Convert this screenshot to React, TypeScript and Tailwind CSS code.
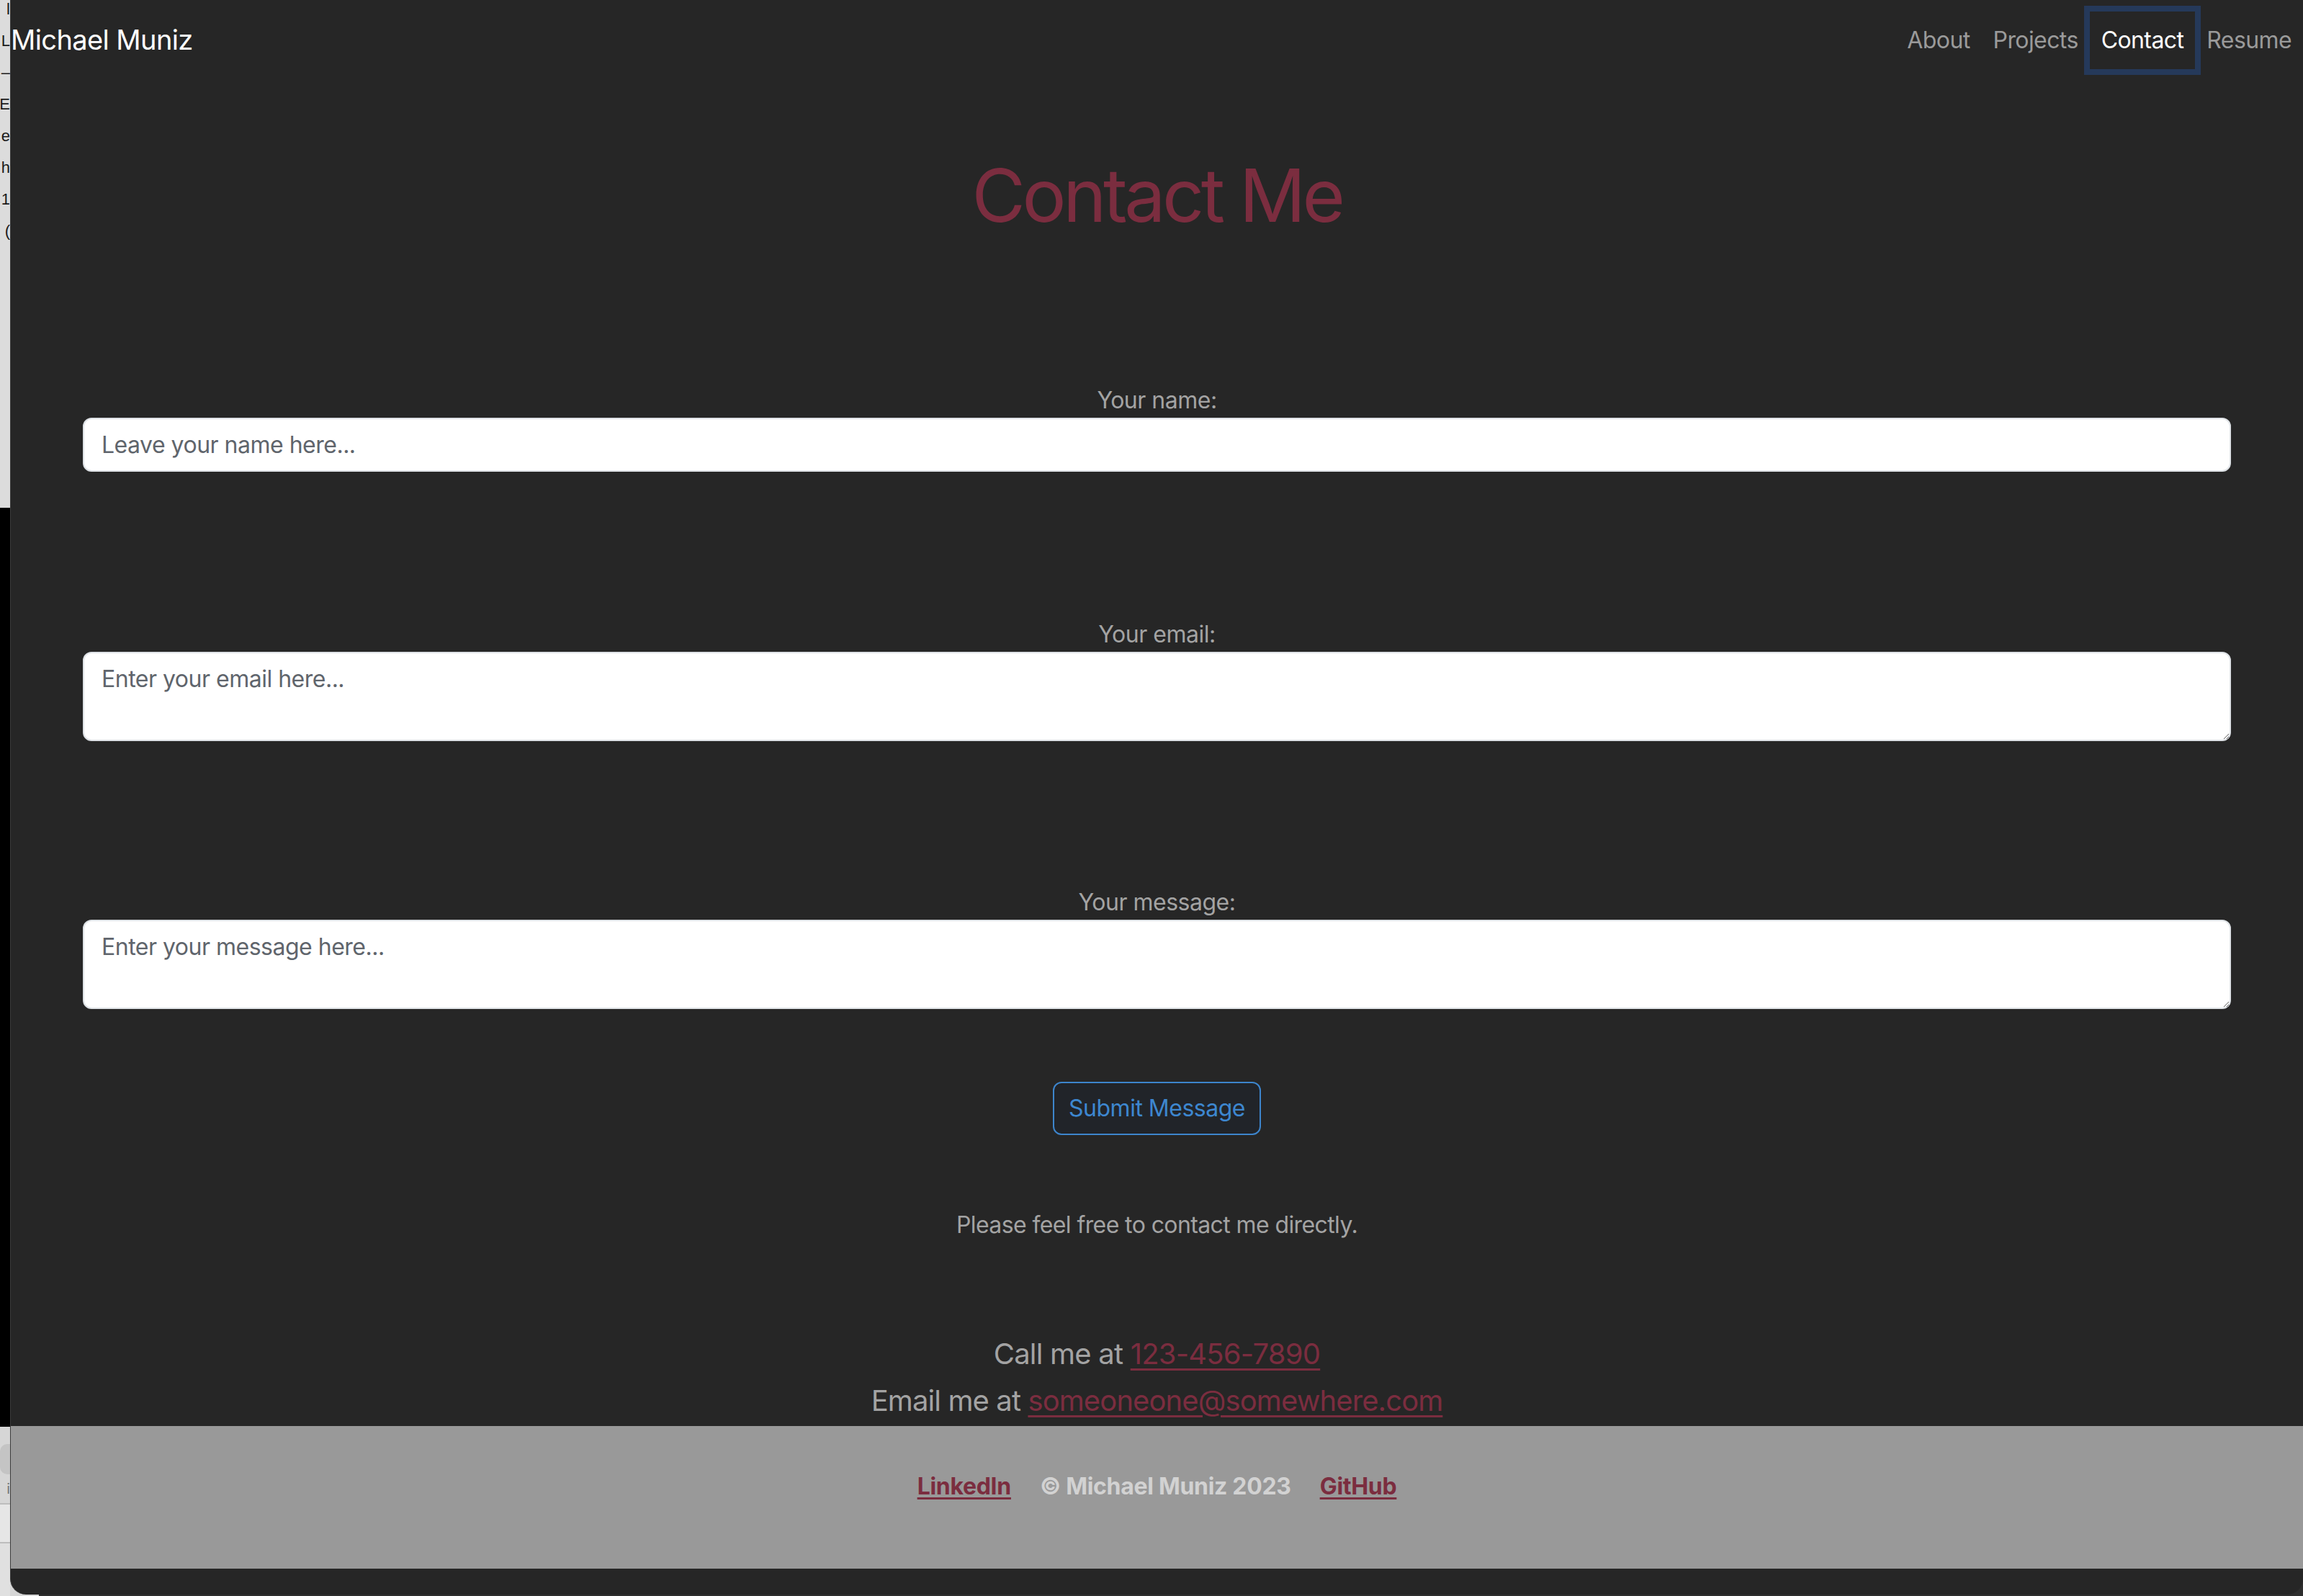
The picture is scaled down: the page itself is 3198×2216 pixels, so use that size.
import React from "react";

const stripLines = ["l", "L", "–", "E", "e", "h", "1", "("];

export default function App() {
  return (
    <div className="flex w-[3198px] h-[2216px] bg-black font-[Inter,sans-serif] overflow-hidden">
      {/* background window strip */}
      <div className="w-[14px] shrink-0 flex flex-col">
        <div className="h-[705px] bg-[#dcdcdc] flex flex-col overflow-hidden">
          <div className="flex flex-col mt-[-9px]">
            {stripLines.map((l, i) => (
              <div
                key={i}
                className="h-[44px] flex justify-end items-center whitespace-nowrap text-[22px] leading-[44px] text-[#1a1a1a] font-[Helvetica,Arial,sans-serif]"
              >
                <span>{l}</span>
              </div>
            ))}
          </div>
        </div>
        <div className="h-[1276px] bg-black" />
        <div className="flex-1 bg-[#d6d6d6] flex flex-col">
          <div className="h-[24px]" />
          <div className="h-[42px] bg-[#c4c4c4] rounded-l-[10px]" />
          <div className="h-[40px] flex justify-end items-center whitespace-nowrap text-[20px] text-[#777]">
            <span>i</span>
          </div>
          <div className="h-[2px] bg-[#bdbdbd]" />
          <div className="h-[52px] bg-[#e6e6e6]" />
          <div className="h-[2px] bg-[#bdbdbd]" />
          <div className="flex-1 bg-[#e0e0e0]" />
        </div>
      </div>

      {/* main window */}
      <div className="flex-1 h-[2216px] bg-[linear-gradient(to_right,#d6d6d6_40px,#2e2e2e_40px)]">
        <div className="h-[2214px] bg-[#262626] rounded-b-[22px] border-l border-[#3c3c3c] flex flex-col overflow-hidden">
          {/* navbar */}
          <nav className="flex items-start justify-between h-[112px]">
            <a className="text-white text-[38px] leading-[60px] mt-[25px] tracking-[-0.6px]">Michael Muniz</a>
            <ul className="flex items-start pt-[16px] tracking-[-0.6px]">
              <li>
                <a className="block px-[16px] py-[16px] text-[32px] leading-[48px] text-[#9a9a9a]">About</a>
              </li>
              <li>
                <a className="block px-[16px] py-[16px] text-[32px] leading-[48px] text-[#9a9a9a]">Projects</a>
              </li>
              <li>
                <a className="block px-[16px] py-[16px] text-[32px] leading-[48px] text-white outline-8 outline-solid outline-[#25395a]">
                  Contact
                </a>
              </li>
              <li>
                <a className="block px-[16px] py-[16px] text-[32px] leading-[48px] text-[#9a9a9a]">Resume</a>
              </li>
            </ul>
          </nav>

          {/* heading */}
          <h1 className="mt-[92px] text-center text-[102px] leading-[134px] text-[#7b2d3f] font-normal tracking-[-4.5px]">
            Contact Me
          </h1>

          {/* form */}
          <form className="px-[100px] flex flex-col tracking-[-0.5px]">
            <label className="mt-[194px] block text-center text-[32px] leading-[48px] text-[#a3a3a3]">Your name:</label>
            <input
              type="text"
              placeholder="Leave your name here..."
              className="w-full h-[75px] rounded-[12px] border-2 border-[#dee2e6] bg-white px-[24px] text-[32px] tracking-[-0.5px] text-[#212529] placeholder:text-[#5f656c] outline-none"
            />

            <label className="mt-[202px] block text-center text-[32px] leading-[48px] text-[#a3a3a3]">Your email:</label>
            <textarea
              placeholder="Enter your email here..."
              className="w-full h-[124px] rounded-[12px] border-2 border-[#dee2e6] bg-white px-[24px] py-[12px] text-[32px] leading-[48px] tracking-[-0.5px] text-[#212529] placeholder:text-[#5f656c] outline-none resize-y block"
            />

            <label className="mt-[200px] block text-center text-[32px] leading-[48px] text-[#a3a3a3]">Your message:</label>
            <textarea
              placeholder="Enter your message here..."
              className="w-full h-[124px] rounded-[12px] border-2 border-[#dee2e6] bg-white px-[24px] py-[12px] text-[32px] leading-[48px] tracking-[-0.5px] text-[#212529] placeholder:text-[#5f656c] outline-none resize-y block"
            />

            <div className="mt-[101px] flex justify-center">
              <button
                type="button"
                className="h-[74px] px-[20px] rounded-[12px] border-2 border-[#3d85cc] bg-[#212429] text-[#3d87d0] text-[32px] leading-[48px] tracking-[-0.5px]"
              >
                Submit Message
              </button>
            </div>
          </form>

          <p className="mt-[101px] text-center text-[32px] leading-[48px] text-[#a3a3a3] tracking-[-0.6px]">
            Please feel free to contact me directly.
          </p>

          <p className="mt-[125px] text-center text-[40px] leading-[60px] text-[#a3a3a3] tracking-[-0.8px]">
            Call me at{" "}
            <a className="text-[#7b2d3f] underline decoration-[3px] underline-offset-[6px]">123-456-7890</a>
          </p>
          <p className="mt-[5px] text-center text-[40px] leading-[60px] text-[#a3a3a3] tracking-[-0.9px]">
            Email me at{" "}
            <a className="text-[#7b2d3f] underline decoration-[3px] underline-offset-[6px]">someoneone@somewhere.com</a>
          </p>

          {/* footer */}
          <footer className="mt-auto h-[198px] bg-[#999999] flex justify-center items-start pt-[60px] gap-[40px] text-[32px] leading-[48px] font-bold tracking-[-0.3px]">
            <a className="text-[#7b2d3f] underline decoration-[3px] underline-offset-[4px]">LinkedIn</a>
            <span className="text-[#d2d2d2]">© Michael Muniz 2023</span>
            <a className="text-[#7b2d3f] underline decoration-[3px] underline-offset-[4px]">GitHub</a>
          </footer>
          <div className="h-[36px] shrink-0" />
        </div>
      </div>
    </div>
  );
}
